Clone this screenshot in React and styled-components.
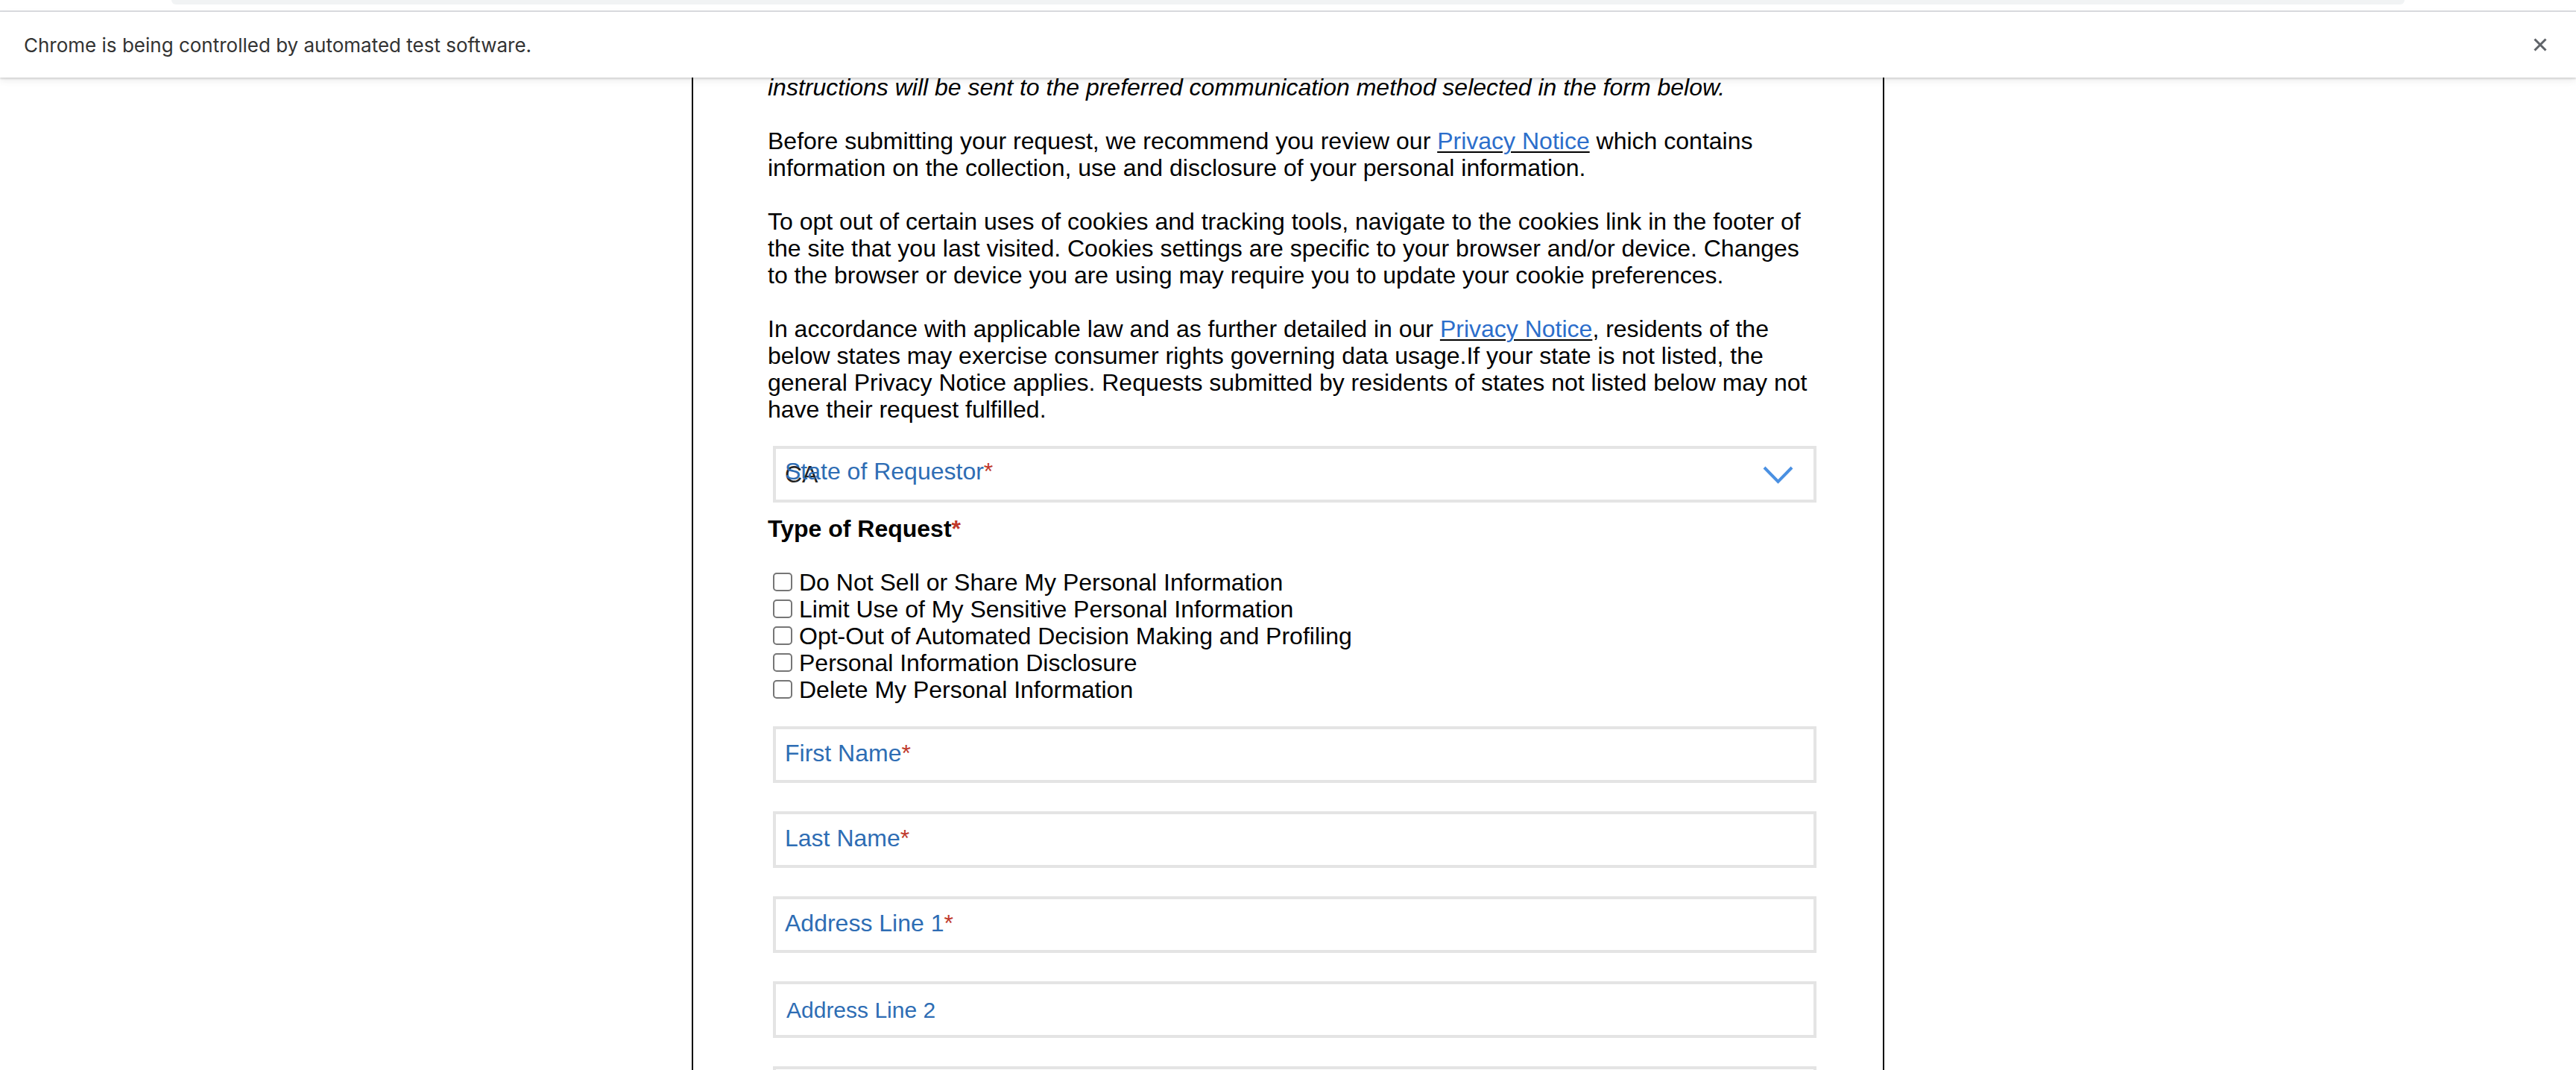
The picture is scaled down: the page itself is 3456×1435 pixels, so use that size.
import React from "react";
import styled, { createGlobalStyle } from "styled-components";

const GlobalStyle = createGlobalStyle`
  html, body {
    margin: 0;
    padding: 0;
    background: #fff;
    overflow: hidden;
  }
  * {
    box-sizing: border-box;
  }
`;

const FONT = `"Liberation Sans", Arial, sans-serif`;

const Frame = styled.div`
  height: 1435px;
  display: flex;
  flex-direction: column;
  overflow: hidden;
  background: #fff;
`;

const TopStrip = styled.div`
  height: 16px;
  padding-left: 230px;
  border-bottom: 2px solid #dadce0;
  background: #fff;
`;

const OmniboxTail = styled.div`
  width: 2996px;
  height: 6px;
  background: #f1f3f4;
  border-radius: 0 0 18px 18px;
`;

const InfoBar = styled.div`
  position: relative;
  z-index: 2;
  height: 88px;
  display: flex;
  align-items: center;
  justify-content: space-between;
  padding: 0 39px 0 32px;
  background: #fff;
  box-shadow: 0 2px 2px rgba(0, 0, 0, 0.12), 0 4px 10px rgba(0, 0, 0, 0.08);
`;

const InfoText = styled.span`
  font-family: Inter, "Liberation Sans", sans-serif;
  font-size: 26px;
  color: #333;
`;

const CloseButton = styled.button`
  width: 18px;
  height: 18px;
  padding: 0;
  border: none;
  background: none;
  display: flex;
  cursor: pointer;
`;

const Viewport = styled.div`
  flex: 1;
  overflow: hidden;
  background: #fff;
`;

const Page = styled.section`
  width: 1600px;
  min-height: 1400px;
  margin: -5px auto 0;
  border-left: 2px solid #000;
  border-right: 2px solid #000;
  padding: 0 82px 0 100px;
  font-family: ${FONT};
  font-size: 32px;
  line-height: 36px;
  color: #000;
`;

const Paragraph = styled.p`
  margin: 0 0 36px;
  font-style: ${({ italic }) => (italic ? "italic" : "normal")};

  &:last-of-type {
    margin-bottom: 0;
  }
`;

const Link = styled.a`
  color: #2c6ecb;
  text-decoration: underline;
  text-decoration-color: #000;
  text-decoration-thickness: 2px;
  text-underline-offset: 3px;
`;

const Required = styled.span`
  color: #c0392b;
`;

const SelectBox = styled.div`
  position: relative;
  height: 76px;
  margin: 31px 7px 0;
  border: 4px solid #e4e4e4;
  padding: 12px 27px 0 12px;
  display: flex;
  justify-content: space-between;
  align-items: flex-start;
`;

const SelectValue = styled.span`
  padding-top: 4px;
  color: #222;
`;

const FloatLabel = styled.span`
  position: absolute;
  top: 12px;
  left: 12px;
  color: #2e6db4;
`;

const Chevron = styled.svg`
  margin-top: 11px;
  width: 41px;
  height: 24px;
`;

const Heading = styled.div`
  margin: 17px 0 36px;
  font-weight: bold;
`;

const CheckList = styled.div`
  display: flex;
  flex-direction: column;
`;

const CheckRow = styled.label`
  height: 36px;
  display: flex;
  align-items: center;
`;

const CheckBox = styled.input`
  appearance: none;
  width: 26px;
  height: 25px;
  margin: -2px 9px 0 7px;
  border: 2px solid #767676;
  border-radius: 5px;
  background: #fff;
`;

const FieldList = styled.div`
  margin-top: 31px;
  padding: 0 7px;
  display: flex;
  flex-direction: column;
  gap: 38px;
`;

const TextField = styled.div`
  height: 76px;
  flex-shrink: 0;
  border: 4px solid #e4e4e4;
  padding: ${({ small }) => (small ? "17px 14px 0" : "14px 12px 0")};
  font-size: ${({ small }) => (small ? "30px" : "32px")};
  color: #2e6db4;
`;

const requestTypes = [
  "Do Not Sell or Share My Personal Information",
  "Limit Use of My Sensitive Personal Information",
  "Opt-Out of Automated Decision Making and Profiling",
  "Personal Information Disclosure",
  "Delete My Personal Information",
];

const fields = [
  { label: "First Name", required: true },
  { label: "Last Name", required: true },
  { label: "Address Line 1", required: true },
  { label: "Address Line 2", required: false },
  { label: "City", required: true },
];

const App = () => {
  return (
    <Frame>
      <GlobalStyle />
      <TopStrip>
        <OmniboxTail />
      </TopStrip>
      <InfoBar>
        <InfoText>Chrome is being controlled by automated test software.</InfoText>
        <CloseButton aria-label="Close">
          <svg width="18" height="18" viewBox="0 0 18 18">
            <path d="M1.5 1.5 16.5 16.5M16.5 1.5 1.5 16.5" stroke="#5f6368" strokeWidth="3" fill="none" />
          </svg>
        </CloseButton>
      </InfoBar>

      <Viewport>
        <Page>
          <Paragraph italic>
            instructions will be sent to the preferred communication method selected in the form below.
          </Paragraph>
          <Paragraph>
            Before submitting your request, we recommend you review our <Link href="#">Privacy Notice</Link> which
            contains information on the collection, use and disclosure of your personal information.
          </Paragraph>
          <Paragraph>
            To opt out of certain uses of cookies and tracking tools, navigate to the cookies link in the footer of
            the site that you last visited. Cookies settings are specific to your browser and/or device. Changes to
            the browser or device you are using may require you to update your cookie preferences.
          </Paragraph>
          <Paragraph>
            In accordance with applicable law and as further detailed in our <Link href="#">Privacy Notice</Link>,
            residents of the below states may exercise consumer rights governing data usage.If your state is not
            listed, the general Privacy Notice applies. Requests submitted by residents of states not listed below
            may not have their request fulfilled.
          </Paragraph>

          <SelectBox>
            <SelectValue>CA</SelectValue>
            <FloatLabel>
              State of Requestor<Required>*</Required>
            </FloatLabel>
            <Chevron viewBox="0 0 41 24">
              <polyline points="2,2 20.5,21 39,2" fill="none" stroke="#4a90e2" strokeWidth="4" />
            </Chevron>
          </SelectBox>

          <Heading>
            Type of Request<Required>*</Required>
          </Heading>

          <CheckList>
            {requestTypes.map((type) => (
              <CheckRow key={type}>
                <CheckBox type="checkbox" />
                {type}
              </CheckRow>
            ))}
          </CheckList>

          <FieldList>
            {fields.map((field) => (
              <TextField key={field.label} small={!field.required}>
                {field.label}
                {field.required && <Required>*</Required>}
              </TextField>
            ))}
          </FieldList>
        </Page>
      </Viewport>
    </Frame>
  );
};

export default App;
